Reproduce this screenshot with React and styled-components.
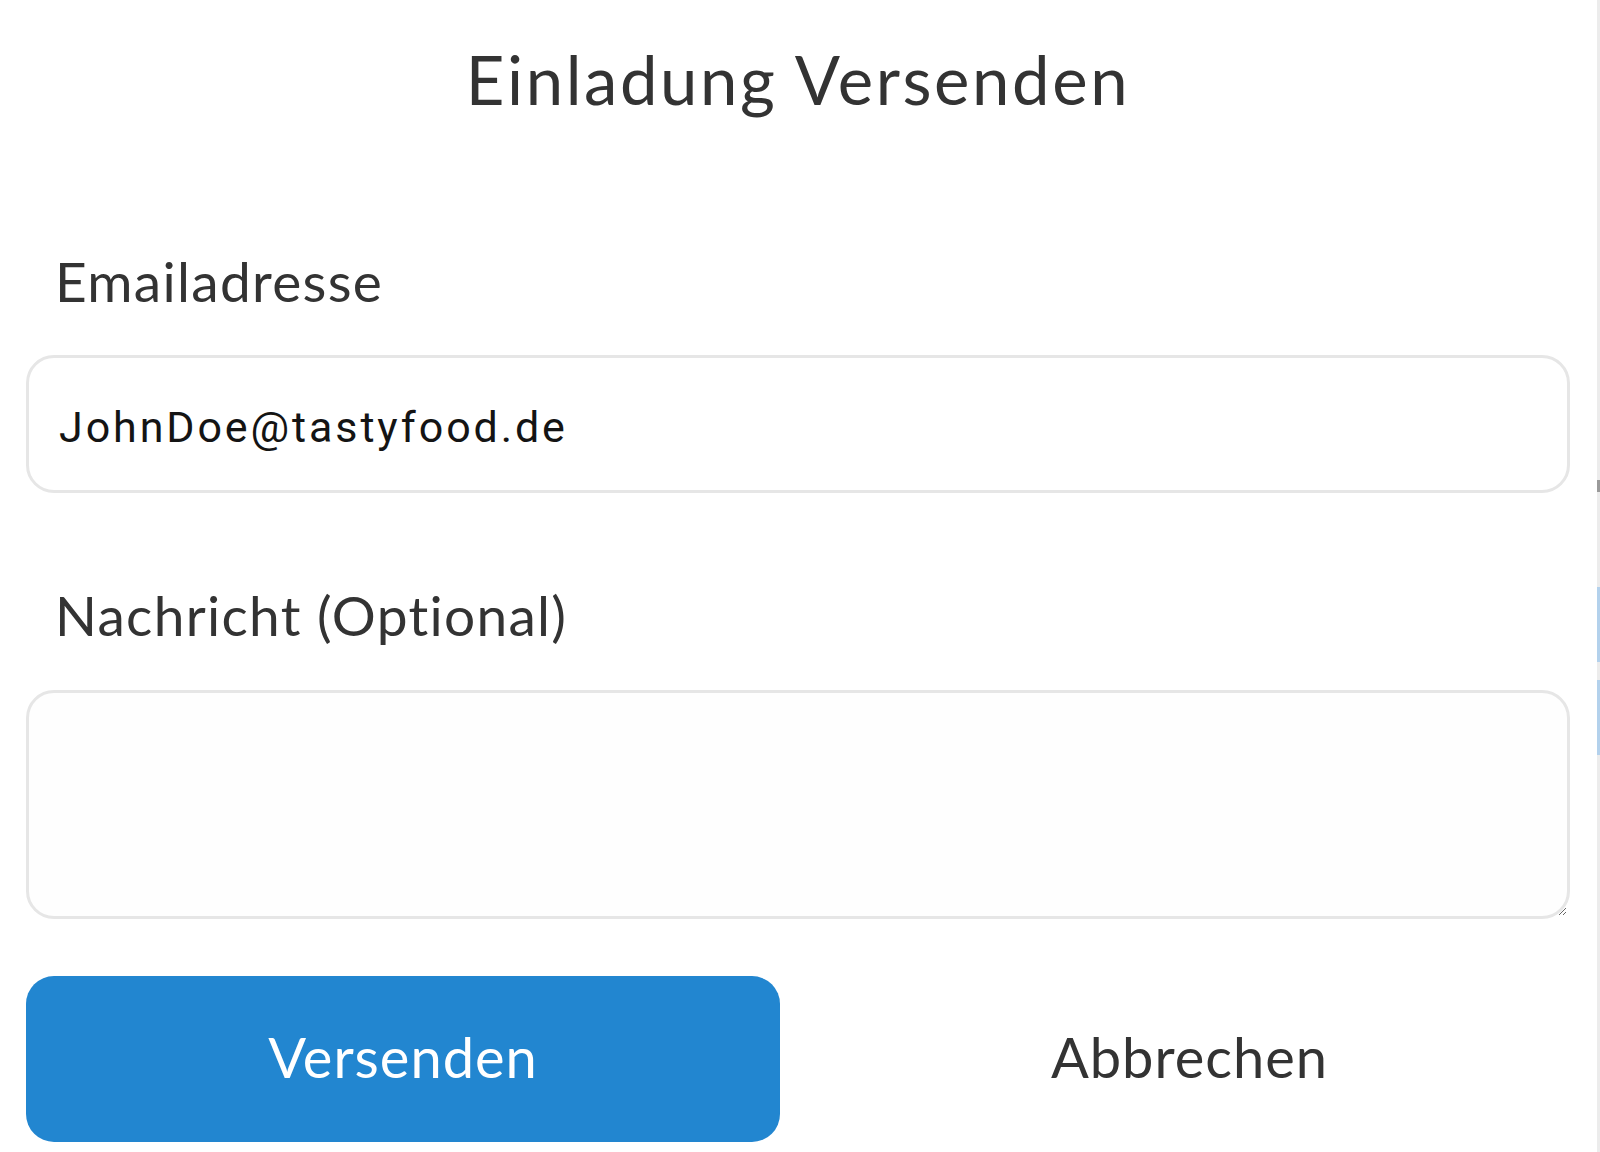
import React from "react";
import styled, { createGlobalStyle } from "styled-components";

const GlobalStyle = createGlobalStyle`
  html, body {
    margin: 0;
    padding: 0;
    background: #ffffff;
  }
  body {
    font-family: "Lato", "Noto Sans", sans-serif;
    color: #333333;
  }
  * { box-sizing: border-box; }
`;

const Page = styled.div`
  display: flex;
  width: 1600px;
  height: 1152px;
  overflow: hidden;
  background: #ffffff;
`;

const Dialog = styled.form`
  flex: 1;
  display: flex;
  flex-direction: column;
  padding: 46px 27px 0 26px;
`;

const EdgeStrip = styled.div`
  width: 3px;
  background: #ececec;
  display: flex;
  flex-direction: column;
`;

const EdgeMark = styled.div`
  width: 3px;
  height: ${(p) => p.$h}px;
  margin-top: ${(p) => p.$top}px;
  background: ${(p) => p.$color};
`;

const Title = styled.h1`
  margin: 0;
  font-family: "Lato", "Noto Sans", sans-serif;
  font-weight: 400;
  font-size: 67px;
  line-height: 67px;
  letter-spacing: 2.6px;
  text-align: center;
  color: #333333;
`;

const Field = styled.label`
  display: flex;
  flex-direction: column;
  gap: ${(p) => p.$gap}px;
  margin-top: ${(p) => p.$top}px;
`;

const Label = styled.span`
  padding-left: 29px;
  font-family: "Lato", "Noto Sans", sans-serif;
  font-weight: 400;
  font-size: 55px;
  line-height: 55px;
  letter-spacing: 1.3px;
  color: #333333;
`;

const TextInput = styled.input`
  width: 100%;
  height: 138px;
  margin: 0;
  padding: 6px 34px 0 30px;
  border: 3px solid #e6e6e6;
  border-radius: 28px;
  background: #ffffff;
  font-family: "Roboto", "Open Sans", sans-serif;
  font-weight: 400;
  font-size: 43px;
  letter-spacing: 2.9px;
  color: #141414;
  outline: none;
`;

const TextArea = styled.textarea`
  display: block;
  width: 100%;
  height: 229px;
  margin: 0;
  padding: 30px 34px;
  border: 3px solid #e6e6e6;
  border-radius: 28px;
  background: #fefefe;
  font-family: "Roboto", "Open Sans", sans-serif;
  font-size: 43px;
  color: #141414;
  outline: none;
`;

const Actions = styled.div`
  display: grid;
  grid-template-columns: 754px 1fr;
  gap: 29px;
  margin-top: 57px;
`;

const Button = styled.button`
  height: 166px;
  margin: 0;
  padding: 0 0 6px;
  border: none;
  border-radius: 28px;
  background: ${(p) => (p.$primary ? "#2286d0" : "transparent")};
  color: ${(p) => (p.$primary ? "#ffffff" : "#333333")};
  font-family: "Lato", "Noto Sans", sans-serif;
  font-weight: 400;
  font-size: 56px;
  letter-spacing: 1px;
  cursor: pointer;
`;

export default function App() {
  return (
    <>
      <GlobalStyle />
      <Page>
        <Dialog onSubmit={(e) => e.preventDefault()}>
          <Title>Einladung Versenden</Title>
          <Field $top={141} $gap={46}>
            <Label>Emailadresse</Label>
            <TextInput type="email" defaultValue="JohnDoe@tastyfood.de" />
          </Field>
          <Field $top={95} $gap={47}>
            <Label>Nachricht (Optional)</Label>
            <TextArea />
          </Field>
          <Actions>
            <Button type="submit" $primary>Versenden</Button>
            <Button type="button">Abbrechen</Button>
          </Actions>
        </Dialog>
        <EdgeStrip>
          <EdgeMark $top={480} $h={12} $color="#9a9a9a" />
          <EdgeMark $top={95} $h={75} $color="#b3d1ec" />
          <EdgeMark $top={18} $h={75} $color="#b3d1ec" />
        </EdgeStrip>
      </Page>
    </>
  );
}
